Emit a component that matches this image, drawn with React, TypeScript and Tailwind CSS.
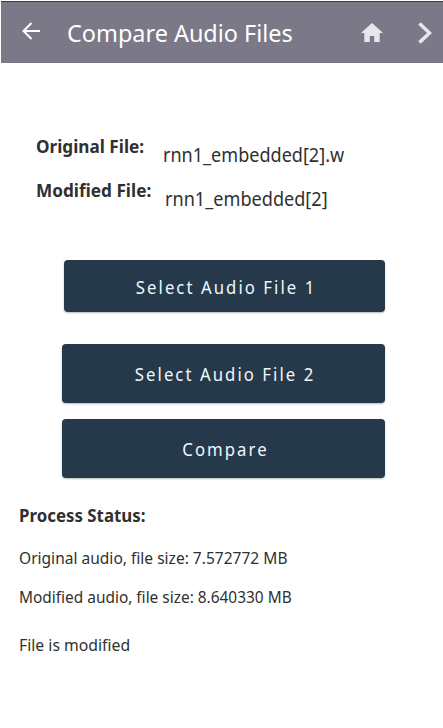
import React from "react";

type ButtonProps = { label: string; className: string };

function ActionButton({ label, className }: ButtonProps) {
  return (
    <button
      className={`flex items-center justify-center rounded bg-[#26394a] pl-[3px] pt-[2px] text-[18px] tracking-[2.2px] text-[#edf8fb] shadow-[0_1px_2px_rgba(38,57,74,0.35)] ${className}`}
    >
      <span className="block scale-x-[0.93] whitespace-nowrap">{label}</span>
    </button>
  );
}

export default function App() {
  return (
    <div className="flex h-[728px] w-[443px] flex-col overflow-hidden bg-white font-['Noto_Sans',sans-serif] text-[#303030]">
      <header className="ml-px mt-px flex h-[62px] shrink-0 items-center border-t border-[#2b3d4a] bg-[#7b7987] text-white">
        <svg className="mb-[3px] ml-[21px] h-[18px] w-[18px] shrink-0" viewBox="0 0 18 18" fill="none" stroke="currentColor" strokeWidth="2">
          <path d="M9.5 1L1.5 9l8 8M1.5 9H18" />
        </svg>
        <h1 className="ml-[26.5px] w-[294.5px] origin-left scale-x-[0.976] whitespace-nowrap text-[24px] leading-[32px]">Compare Audio Files</h1>
        <svg className="h-[19px] w-[22px] shrink-0" viewBox="0 0 22 19" fill="#e7e7eb">
          <path d="M11 0L0 10h3.3v9h5.5v-6h4.4v6h5.5v-9H22z" />
        </svg>
        <svg className="ml-[35px] h-[22px] w-[14px] shrink-0" viewBox="0 0 14 22" fill="none" stroke="#e7e7eb" strokeWidth="3.6">
          <path d="M1.5 1.5L11.5 11l-10 9.5" />
        </svg>
      </header>

      <section className="ml-9 mt-[71px] flex shrink-0 flex-col gap-1">
        <div className="flex h-10 items-start whitespace-nowrap">
          <span className="w-[126.5px] origin-left scale-x-[0.953] text-[18px] font-bold leading-[25px]">Original File:</span>
          <span className="mt-[9px] origin-left scale-x-[0.95] text-[19px] leading-[25px]">rnn1_embedded[2].w</span>
        </div>
        <div className="flex h-10 items-start whitespace-nowrap">
          <span className="w-[128.5px] origin-left scale-x-[0.956] text-[18px] font-bold leading-[25px]">Modified File:</span>
          <span className="mt-[9px] origin-left scale-x-[0.953] text-[19px] leading-[25px]">rnn1_embedded[2]</span>
        </div>
      </section>

      <div className="ml-[62px] mt-[42px] flex w-[323px] shrink-0 flex-col">
        <ActionButton label="Select Audio File 1" className="ml-[2px] h-[52px]" />
        <ActionButton label="Select Audio File 2" className="mt-[32px] h-[59px]" />
        <ActionButton label="Compare" className="mt-[16px] h-[59px]" />
      </div>

      <section className="ml-[18.5px] mt-[25px] flex flex-col whitespace-nowrap text-[17px] leading-[24px]">
        <h2 className="origin-left scale-x-[0.937] text-[18px] font-bold">Process Status:</h2>
        <p className="mt-[19px] origin-left scale-x-[0.914]">Original audio, file size: 7.572772 MB</p>
        <p className="mt-[15px] origin-left scale-x-[0.907]">Modified audio, file size: 8.640330 MB</p>
        <p className="mt-[24px] origin-left scale-x-[0.928]">File is modified</p>
      </section>
    </div>
  );
}
